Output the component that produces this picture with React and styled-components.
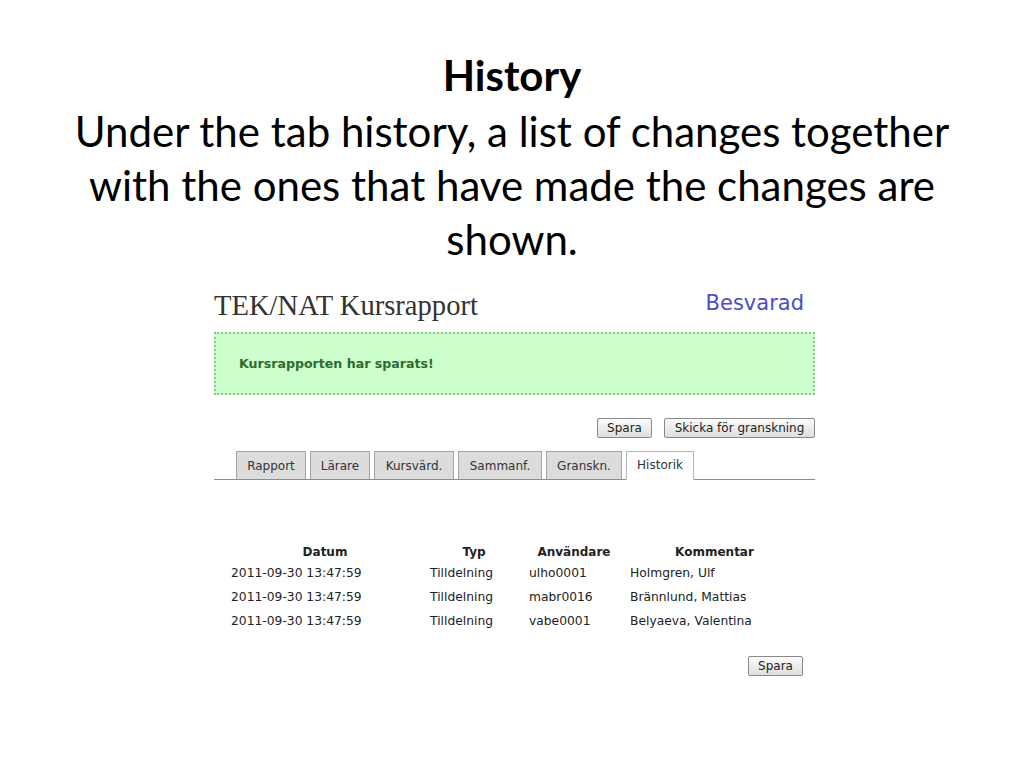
import React from "react";
import styled, { createGlobalStyle } from "styled-components";

const Global = createGlobalStyle`
  html, body { margin: 0; padding: 0; background: #ffffff; }
  body { width: 1024px; height: 768px; overflow: hidden; }
`;

const Slide = styled.div`
  width: 1024px;
  height: 768px;
  display: flex;
  flex-direction: column;
  align-items: stretch;
  padding-top: 47px;
  box-sizing: border-box;
`;

const Caption = styled.div`
  font-family: Lato, "Open Sans", sans-serif;
  font-size: 42px;
  line-height: 54px;
  color: #000;
  text-align: center;
  padding: 0 40px;
`;

const CaptionTitle = styled.div`
  font-weight: 700;
  line-height: 57px;
`;

const App = styled.div`
  width: 601px;
  margin-left: 214px;
  margin-top: 23px;
  display: flex;
  flex-direction: column;
  font-family: "DejaVu Sans", Verdana, sans-serif;
`;

const Header = styled.div`
  display: flex;
  justify-content: space-between;
  align-items: flex-start;
  height: 34px;
`;

const AppTitle = styled.div`
  font-family: "Liberation Serif", "Times New Roman", serif;
  font-size: 28.6px;
  line-height: 34px;
  color: #333;
`;

const Status = styled.div`
  font-size: 21px;
  line-height: 26px;
  margin-top: 1px;
  color: #4c4cc6;
  margin-right: 11px;
`;

const Notice = styled.div`
  margin-top: 9px;
  height: 59px;
  background: #ccffcc;
  border: 2px dotted #99bb99;
  display: flex;
  align-items: center;
  padding-left: 23px;
  font-size: 12.6px;
  font-weight: 700;
  color: #2f6b2f;
`;

const ButtonRow = styled.div`
  display: flex;
  justify-content: flex-end;
  gap: 12px;
  margin-top: ${(p) => p.$top}px;
  padding-right: ${(p) => p.$right || 0}px;
`;

const Button = styled.button`
  height: 20px;
  padding: 0;
  border: 1px solid #8a8a8a;
  border-radius: 2px;
  background: linear-gradient(#fbfbfb, #dedede);
  font-family: "DejaVu Sans", Verdana, sans-serif;
  font-size: 12px;
  color: #222;
  line-height: 18px;
  box-sizing: border-box;
  width: ${(p) => p.$w}px;
`;

const TabBar = styled.div`
  margin-top: 13px;
  display: flex;
  align-items: flex-end;
  gap: 4px;
  padding-left: 22px;
  border-bottom: 1px solid #8c8c8c;
  height: 28px;
`;

const Tab = styled.div`
  box-sizing: border-box;
  width: ${(p) => p.$w}px;
  border: 1px solid ${(p) => (p.$active ? "#b5b5b5" : "#a4a4a4")};
  border-bottom: ${(p) => (p.$active ? "1px solid #fff" : "none")};
  margin-bottom: ${(p) => (p.$active ? "-1px" : "0")};
  height: ${(p) => (p.$active ? "29px" : "28px")};
  background: ${(p) => (p.$active ? "#ffffff" : "#dcdcdc")};
  display: flex;
  align-items: center;
  justify-content: center;
  font-size: 12px;
  color: #333;
  padding-bottom: ${(p) => (p.$active ? "2px" : "0")};
`;

const Table = styled.div`
  margin-top: 63px;
  margin-left: 17px;
  display: grid;
  grid-template-columns: 188px 88px 90px 169px;
  column-gap: 11px;
  font-size: 12.3px;
  color: #222;
`;

const Th = styled.div`
  font-weight: 700;
  text-align: center;
  height: 18px;
  line-height: 18px;
  white-space: nowrap;
  font-size: 12px;
`;

const Td = styled.div`
  height: 24px;
  line-height: 24px;
  white-space: nowrap;
`;

const tabs = [
  { label: "Rapport", w: 70 },
  { label: "Lärare", w: 60 },
  { label: "Kursvärd.", w: 80 },
  { label: "Sammanf.", w: 84 },
  { label: "Granskn.", w: 76 },
  { label: "Historik", w: 68, active: true },
];

const rows = [
  ["2011-09-30 13:47:59", "Tilldelning", "ulho0001", "Holmgren, Ulf"],
  ["2011-09-30 13:47:59", "Tilldelning", "mabr0016", "Brännlund, Mattias"],
  ["2011-09-30 13:47:59", "Tilldelning", "vabe0001", "Belyaeva, Valentina"],
];

export default function Page() {
  return (
    <>
      <Global />
      <Slide>
        <Caption>
          <CaptionTitle>History</CaptionTitle>
          Under the tab history, a list of changes together with the ones that
          have made the changes are shown.
        </Caption>
        <App>
          <Header>
            <AppTitle>TEK/NAT Kursrapport</AppTitle>
            <Status>Besvarad</Status>
          </Header>
          <Notice>Kursrapporten har sparats!</Notice>
          <ButtonRow $top={23}>
            <Button $w={55}>Spara</Button>
            <Button $w={151}>Skicka för granskning</Button>
          </ButtonRow>
          <TabBar>
            {tabs.map((t) => (
              <Tab key={t.label} $w={t.w} $active={t.active}>
                {t.label}
              </Tab>
            ))}
          </TabBar>
          <Table>
            <Th>Datum</Th>
            <Th>Typ</Th>
            <Th>Användare</Th>
            <Th>Kommentar</Th>
            {rows.map((r, i) =>
              r.map((c, j) => <Td key={i + "-" + j}>{c}</Td>)
            )}
          </Table>
          <ButtonRow $top={23} $right={12}>
            <Button $w={55}>Spara</Button>
          </ButtonRow>
        </App>
      </Slide>
    </>
  );
}
